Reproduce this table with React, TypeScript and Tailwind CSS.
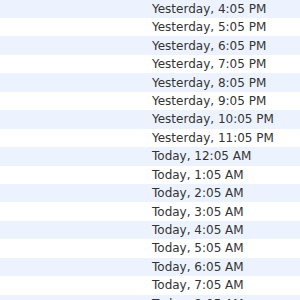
const times = [
  'Yesterday, 4:05 PM',
  'Yesterday, 5:05 PM',
  'Yesterday, 6:05 PM',
  'Yesterday, 7:05 PM',
  'Yesterday, 8:05 PM',
  'Yesterday, 9:05 PM',
  'Yesterday, 10:05 PM',
  'Yesterday, 11:05 PM',
  'Today, 12:05 AM',
  'Today, 1:05 AM',
  'Today, 2:05 AM',
  'Today, 3:05 AM',
  'Today, 4:05 AM',
  'Today, 5:05 AM',
  'Today, 6:05 AM',
  'Today, 7:05 AM',
  'Today, 8:05 AM',
];

const App = () => {
  return (
    <div className="w-[300px] h-[300px] overflow-hidden bg-white">
      <div className="-mt-[0.45px] font-['DejaVu_Sans',sans-serif] text-[12px] text-[#333333]">
        {times.map((t, i) => (
          <div
            key={t}
            className={`h-[18.45px] flex items-center pl-[152px] ${i % 2 === 0 ? 'bg-[#edf3fe]' : 'bg-white'}`}
          >
            <span className="leading-none whitespace-nowrap">{t}</span>
          </div>
        ))}
      </div>
    </div>
  );
};

export default App;
